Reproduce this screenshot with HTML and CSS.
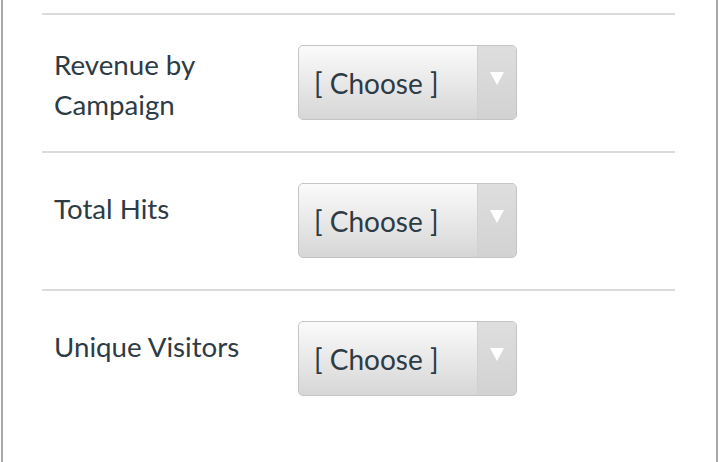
FILE: index.html
```html
<!DOCTYPE html>
<html>
<head>
<meta charset="utf-8">
<link rel="stylesheet" href="styles.css">
</head>
<body>
<div class="frame">
  <div class="list">
    <div class="row">
      <div class="label">Revenue by Campaign</div>
      <div class="select">
        <span class="value">[ Choose ]</span>
        <span class="arrow"><svg width="14" height="13" viewBox="0 0 14 13"><path d="M0 0 H14 L7 13 Z" fill="#fff"/></svg></span>
      </div>
    </div>
    <div class="row">
      <div class="label single">Total Hits</div>
      <div class="select">
        <span class="value">[ Choose ]</span>
        <span class="arrow"><svg width="14" height="13" viewBox="0 0 14 13"><path d="M0 0 H14 L7 13 Z" fill="#fff"/></svg></span>
      </div>
    </div>
    <div class="row">
      <div class="label single">Unique Visitors</div>
      <div class="select">
        <span class="value">[ Choose ]</span>
        <span class="arrow"><svg width="14" height="13" viewBox="0 0 14 13"><path d="M0 0 H14 L7 13 Z" fill="#fff"/></svg></span>
      </div>
    </div>
  </div>
</div>
</body>
</html>
```
FILE: styles.css
```css
html, body {
  margin: 0;
  padding: 0;
  background: #fff;
}
body {
  font-family: Lato, "Liberation Sans", sans-serif;
  color: #2d3b45;
}
.frame {
  margin-left: 1px;
  width: 717px;
  height: 462px;
  border-left: 2px solid #a9a9a9;
  border-right: 2px solid #a9a9a9;
  box-sizing: border-box;
  padding: 13px 0 0 39px;
}
.list {
  width: 633px;
}
.row {
  display: flex;
  align-items: flex-start;
  height: 138px;
  box-sizing: border-box;
  border-top: 2px solid #dcdcdc;
  padding: 30px 0 0 12px;
}
.label {
  width: 244px;
  font-size: 27.7px;
  line-height: 40px;
}
.label.single {
  padding-top: 6px;
}
.select {
  display: flex;
  width: 219px;
  height: 75px;
  box-sizing: border-box;
  border: 1px solid #c4c4c4;
  border-radius: 5px;
  background: linear-gradient(to bottom, #fbfbfb, #d6d6d6);
  overflow: hidden;
}
.value {
  flex: 1;
  display: flex;
  align-items: center;
  padding-left: 15px;
  font-size: 28px;
  color: #2d3b45;
}
.arrow {
  width: 39px;
  border-left: 1px solid #d0d0d0;
  background: linear-gradient(to bottom, #dedede, #d2d2d2);
  display: flex;
  justify-content: center;
  padding-top: 26px;
  box-sizing: border-box;
}
```
